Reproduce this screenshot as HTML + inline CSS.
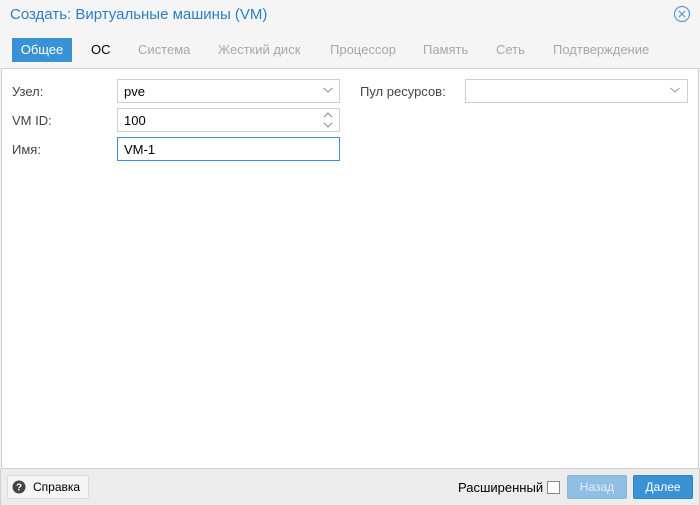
<!DOCTYPE html>
<html><head><meta charset="utf-8"><style>
*{box-sizing:border-box;margin:0;padding:0}
body{width:700px;height:505px;background:#f5f5f5;font-family:"Liberation Sans",sans-serif;font-size:13px;color:#000;position:relative;overflow:hidden}
.a{position:absolute;white-space:nowrap}
.title{left:10px;top:6px;font-size:15px;color:#2a7fc8}
.tab{top:38px;height:24px;line-height:24px;color:#a8a8a8;font-size:13px}
.panel{left:1px;top:68px;width:698px;height:401px;background:#fff;border:1px solid #cfcfcf}
.lbl{color:#444}
.fld{border:1px solid #cfcfcf;height:24px;background:#fff;line-height:23px;padding-left:6px}
.foot{left:0;top:469px;width:700px;height:36px;background:#ececec;border-left:1px solid #cfcfcf;border-right:1px solid #cfcfcf}
.btn{height:24px;line-height:22px;text-align:center;font-size:12px;border-radius:2px}
</style></head><body>
<div class="a title">Создать: Виртуальные машины (VM)</div>
<svg class="a" style="left:673px;top:5px" width="18" height="18" viewBox="0 0 18 18"><circle cx="9" cy="9" r="7.5" fill="none" stroke="#5b9bd5" stroke-width="1.2"/><path d="M5.8 5.8L12.2 12.2M12.2 5.8L5.8 12.2" stroke="#5b9bd5" stroke-width="1.2"/></svg>
<div class="a tab" style="left:12px;width:60px;background:#3892d4;color:#fff;text-align:center">Общее</div>
<div class="a tab" style="left:91px;color:#000">ОС</div>
<div class="a tab" style="left:138px">Система</div>
<div class="a tab" style="left:218px">Жесткий диск</div>
<div class="a tab" style="left:330px">Процессор</div>
<div class="a tab" style="left:423px">Память</div>
<div class="a tab" style="left:496px">Сеть</div>
<div class="a tab" style="left:553px">Подтверждение</div>
<div class="a panel"></div>
<div class="a lbl" style="left:12px;top:84px">Узел:</div>
<div class="a lbl" style="left:12px;top:113px">VM ID:</div>
<div class="a lbl" style="left:12px;top:142px">Имя:</div>
<div class="a fld" style="left:117px;top:79px;width:223px">pve</div>
<div class="a fld" style="left:117px;top:108px;width:223px">100</div>
<div class="a fld" style="left:117px;top:137px;width:223px;border-color:#3892d4">VM-1</div>
<svg class="a" style="left:322px;top:86px" width="12" height="8"><path d="M1.5 2L6 6L10.5 2" fill="none" stroke="#888"/></svg>
<svg class="a" style="left:322px;top:111px" width="12" height="18"><path d="M2 6L6 2L10 6M2 12L6 16L10 12" fill="none" stroke="#888"/></svg>
<div class="a lbl" style="left:360px;top:84px">Пул ресурсов:</div>
<div class="a fld" style="left:465px;top:79px;width:223px"></div>
<svg class="a" style="left:669px;top:86px" width="12" height="8"><path d="M1.5 2L6 6L10.5 2" fill="none" stroke="#999"/></svg>
<div class="a foot"></div>
<div class="a btn" style="left:7px;top:475px;width:82px;background:#f5f5f5;border:1px solid #dcdcdc;text-align:left;padding-left:25px">Справка</div>
<svg class="a" style="left:12px;top:480px" width="14" height="14" viewBox="0 0 14 14"><circle cx="7" cy="7" r="6.5" fill="#444"/><text x="7" y="10.5" font-size="10" font-weight="bold" fill="#fff" text-anchor="middle" font-family="Liberation Sans">?</text></svg>
<div class="a" style="left:458px;top:480px;font-size:13px">Расширенный</div>
<div class="a" style="left:547px;top:481px;width:13px;height:13px;border:1px solid #888;background:#fff"></div>
<div class="a btn" style="left:567px;top:475px;width:60px;background:#90bfe4;color:#dfeefa;border:1px solid #88b8df">Назад</div>
<div class="a btn" style="left:633px;top:475px;width:60px;background:#3892d4;color:#fff;border:1px solid #2f84c4">Далее</div>
</body></html>
